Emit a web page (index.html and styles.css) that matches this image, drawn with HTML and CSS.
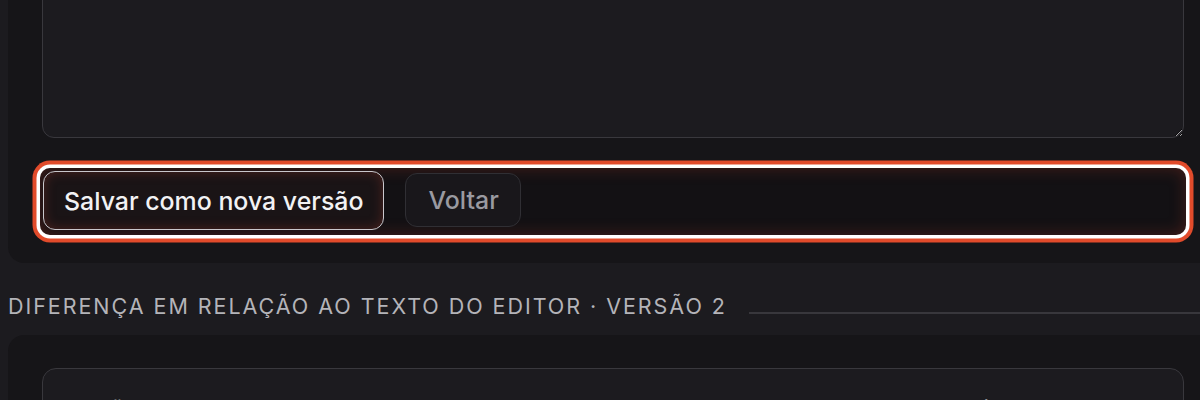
FILE: index.html
```html
<!DOCTYPE html>
<html lang="pt">
<head>
<meta charset="utf-8">
<title>Editor</title>
<link rel="stylesheet" href="styles.css">
</head>
<body>
<div class="page">
  <section class="card card-top">
    <textarea class="editor" aria-label="Texto"></textarea>
    <div class="actions">
      <button class="btn btn-primary" type="button">Salvar como nova versão</button>
      <button class="btn btn-secondary" type="button">Voltar</button>
    </div>
  </section>

  <div class="section-title">
    <h2 class="section-label">Diferença em relação ao texto do editor · Versão 2</h2>
    <span class="section-rule"></span>
  </div>

  <section class="card card-diff">
    <div class="diff-box">
      <div class="diff-head">
        <span class="diff-col">Versão 2</span>
        <span class="diff-col diff-col-right">Texto do editor</span>
      </div>
    </div>
  </section>
</div>
</body>
</html>
```

FILE: styles.css
```css
html, body {
  margin: 0;
  padding: 0;
  background: #1c1b1f;
  overflow: hidden;
  font-family: Inter, "Noto Sans", "Liberation Sans", sans-serif;
}

.page {
  width: 1240px;
  padding-left: 8px;
}

.card {
  background: #161518;
  border-radius: 16px;
  padding: 0 34px;
}

.card-top {
  margin-top: -160px;
  padding-top: 34px;
  padding-bottom: 28px;
  width: 1142px;
}

.editor {
  display: block;
  box-sizing: border-box;
  width: 100%;
  height: 264px;
  margin: 0;
  background: #1c1b1f;
  border: 1px solid #39383d;
  border-radius: 12px;
  resize: vertical;
  color: #e6e6e8;
}

.actions {
  display: flex;
  align-items: flex-start;
  gap: 21px;
  margin: 30px -2px 0 -2px;
  height: 67px;
  box-sizing: border-box;
  padding: 3px 3px;
  background: #131114;
  border-radius: 10px;
  box-shadow:
    inset 0 0 16px rgba(190, 60, 40, 0.3),
    0 0 0 3.5px #ffffff,
    0 0 0 7.5px #e14b2b;
}

.btn {
  font-family: Inter, "Noto Sans", "Liberation Sans", sans-serif;
  font-size: 24.9px;
  font-weight: 500;
  border-radius: 12px;
  cursor: pointer;
}

.btn-primary {
  height: 59px;
  padding: 0 20px;
  color: #f2f2f4;
  background: #1a1416;
  border: 1px solid #c9c7cc;
  box-shadow: inset 0 0 12px rgba(170, 60, 45, 0.35);
}

.btn-secondary {
  margin-top: 2px;
  height: 54px;
  padding: 0 21px 0 22px;
  color: #9a9aa1;
  background: #19171b;
  border: 1px solid #302f34;
}

.section-title {
  display: flex;
  align-items: flex-end;
  gap: 22px;
  margin-top: 30px;
  width: 1192px;
}

.section-label {
  margin: 0;
  font-size: 21.5px;
  font-weight: 400;
  text-transform: uppercase;
  letter-spacing: 1.95px;
  color: #b4b4b9;
  white-space: nowrap;
  line-height: 26px;
}

.section-rule {
  flex: 1;
  height: 2px;
  background: #38373c;
  margin-bottom: 5px;
}

.card-diff {
  margin-top: 16px;
  padding-top: 33px;
  width: 1142px;
  height: 200px;
}

.diff-box {
  background: #1c1b1f;
  border: 1px solid #39383d;
  border-radius: 14px;
  height: 200px;
}

.diff-head {
  display: flex;
  justify-content: space-between;
  padding: 26px 165px 0 20px;
  font-size: 22px;
  font-weight: 500;
  color: #b4b4b9;
}
```
